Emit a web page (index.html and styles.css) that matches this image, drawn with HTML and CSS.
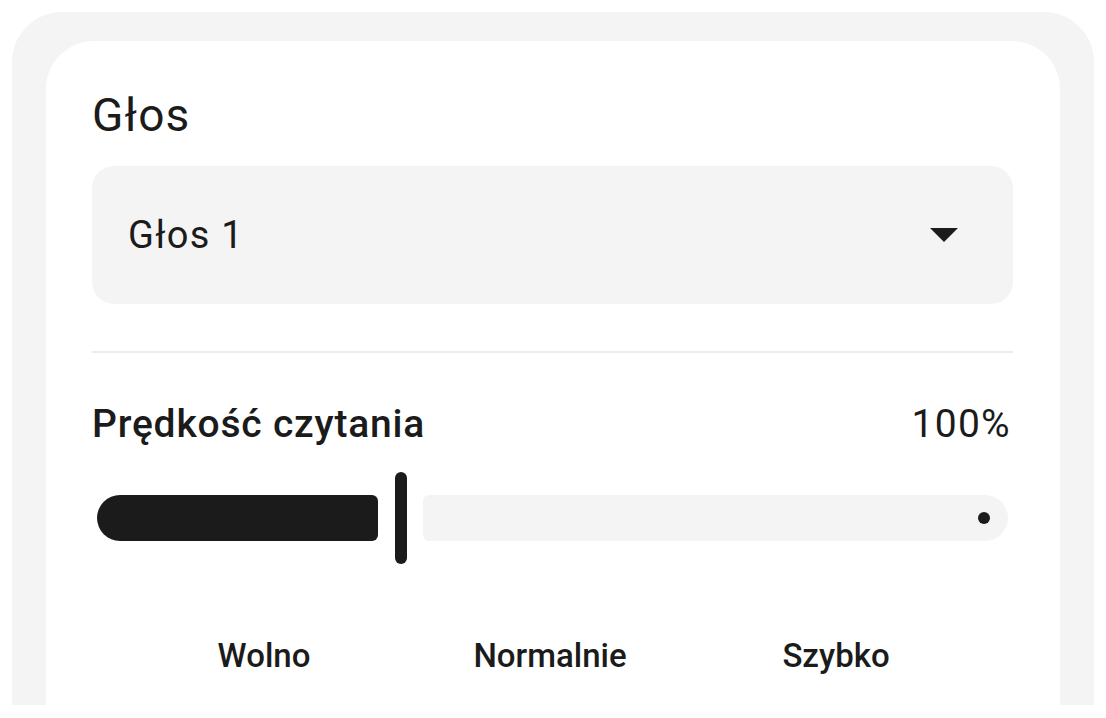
FILE: index.html
```html
<!DOCTYPE html>
<html lang="pl">
<head>
<meta charset="utf-8">
<title>Głos</title>
<link rel="stylesheet" href="styles.css">
</head>
<body>
<div class="frame">
  <div class="card">
    <h2 class="title">Głos</h2>
    <div class="select">
      <span class="select-value">Głos 1</span>
      <svg class="select-arrow" width="28" height="14" viewBox="0 0 28 14"><path d="M0 0 L28 0 L14 14 Z" fill="#1b1b1b"/></svg>
    </div>
    <div class="divider"></div>
    <div class="speed-row">
      <span class="speed-label">Prędkość czytania</span>
      <span class="speed-value">100%</span>
    </div>
    <div class="slider">
      <div class="track-active"></div>
      <div class="thumb"></div>
      <div class="track-inactive"><span class="stop-dot"></span></div>
    </div>
    <div class="ticks">
      <span class="tick">Wolno</span>
      <span class="tick">Normalnie</span>
      <span class="tick">Szybko</span>
    </div>
  </div>
</div>
</body>
</html>
```
FILE: styles.css
```css
html, body {
  margin: 0;
  padding: 0;
  background: #ffffff;
}
body {
  font-family: Roboto, "Noto Sans", sans-serif;
  color: #1b1b1b;
}
.frame {
  margin: 12px 12px 0 12px;
  height: 693px;
  box-sizing: border-box;
  background: #f4f4f4;
  border-radius: 50px 50px 0 0;
  padding: 29px 34px 0 34px;
}
.card {
  height: 664px;
  box-sizing: border-box;
  background: #ffffff;
  border-radius: 48px 48px 0 0;
  padding: 46px 47px 0 46px;
}
.title {
  margin: 0;
  font-size: 46px;
  line-height: 56px;
  font-weight: 400;
  letter-spacing: 1.2px;
}
.select {
  margin-top: 23px;
  height: 138px;
  box-sizing: border-box;
  background: #f4f4f4;
  border-radius: 22px;
  display: flex;
  align-items: center;
  justify-content: space-between;
  padding: 0 55px 0 36px;
}
.select-value {
  font-size: 38px;
  line-height: 44px;
  letter-spacing: 1.3px;
}
.select-arrow {
  display: block;
}
.divider {
  margin-top: 47px;
  height: 2px;
  background: #ececec;
}
.speed-row {
  margin-top: 47px;
  display: flex;
  justify-content: space-between;
  align-items: baseline;
  font-size: 39px;
  line-height: 48px;
  letter-spacing: 0.8px;
}
.speed-label {
  font-weight: 500;
}
.speed-value {
  font-weight: 400;
  letter-spacing: 1.3px;
  margin-right: 2px;
}
.slider {
  margin-top: 24px;
  height: 92px;
  display: flex;
  align-items: center;
  padding: 0 5px;
}
.track-active {
  width: 281px;
  height: 46px;
  background: #1b1b1b;
  border-radius: 23px 6px 6px 23px;
}
.thumb {
  width: 12px;
  height: 92px;
  background: #1b1b1b;
  border-radius: 6px;
  margin: 0 16px 0 17px;
}
.track-inactive {
  flex: 1;
  height: 46px;
  background: #f4f4f4;
  border-radius: 6px 23px 23px 6px;
  display: flex;
  align-items: center;
  justify-content: flex-end;
  padding-right: 18px;
}
.stop-dot {
  width: 12px;
  height: 12px;
  border-radius: 50%;
  background: #1b1b1b;
}
.ticks {
  margin-top: 72px;
  display: grid;
  grid-template-columns: 1fr 1fr 1fr;
  padding: 0 34px 0 29px;
  font-size: 33px;
  line-height: 40px;
  font-weight: 500;
  text-align: center;
}
```
